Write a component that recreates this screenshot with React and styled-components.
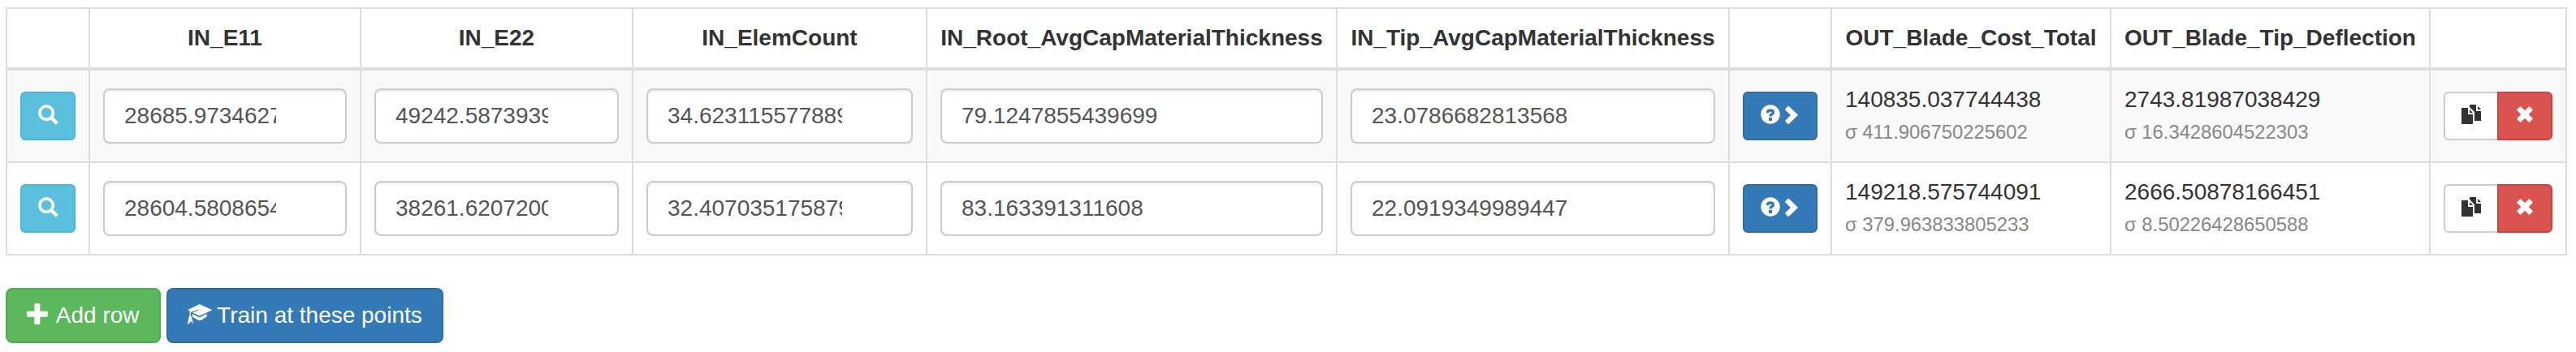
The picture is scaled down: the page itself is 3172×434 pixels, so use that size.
import React from "react";
import styled, { createGlobalStyle, css } from "styled-components";

const GlobalStyle = createGlobalStyle`
  * { box-sizing: border-box; }
  body {
    margin: 0;
    background: #fff;
    color: #333;
    font: 28px/40px "Liberation Sans", Arial, sans-serif;
  }
`;

const Page = styled.main`
  padding: 9px 7px 11px;
`;

const Table = styled.table`
  width: 3154px;
  table-layout: fixed;
  border-collapse: separate;
  border-spacing: 0;
  border: 0 solid #ddd;
  border-top-width: 2px;
  border-left-width: 2px;
  margin-bottom: 40px;
`;

const Col = styled.col`
  width: ${(p) => p.$w}px;
`;

const HeadCell = styled.th`
  height: 76px;
  padding: 16px 0;
  border-right: 2px solid #ddd;
  border-bottom: 4px solid #ddd;
  font-weight: bold;
  text-align: center;
  white-space: nowrap;
`;

const Row = styled.tr`
  &:nth-child(odd) { background: #f9f9f9; }
`;

const Cell = styled.td`
  height: 114px;
  padding: ${(p) => (p.$tight ? "16px 15px 16px 16px" : "16px")};
  border-right: 2px solid #ddd;
  border-bottom: 2px solid #ddd;
  vertical-align: middle;
`;

const NumberField = styled.input`
  display: block;
  width: 100%;
  height: 68px;
  padding: 12px ${(p) => (p.$spinner ? 85 : 24)}px 12px 24px;
  border: 2px solid #ccc;
  border-radius: 8px;
  background: #fff;
  box-shadow: inset 0 2px 2px rgba(0, 0, 0, 0.075);
  color: #555;
  font: inherit;
  outline: none;
`;

const Sigma = styled.div`
  color: #888;
  font-size: 23.8px;
`;

const tones = {
  info: css`background: #5bc0de; border-color: #46b8da; color: #fff;`,
  primary: css`background: #337ab7; border-color: #2e6da4; color: #fff;`,
  success: css`background: #5cb85c; border-color: #4cae4c; color: #fff;`,
  danger: css`background: #d9534f; border-color: #d43f3a; color: #fff;`,
  plain: css`background: #fff; border-color: #ccc; color: #333;`,
};

const Button = styled.button`
  display: inline-flex;
  align-items: center;
  gap: 7.8px;
  height: 68px;
  padding: 0 24px;
  border: 2px solid;
  border-radius: 8px;
  font: inherit;
  white-space: nowrap;
  ${(p) => tones[p.$tone]}
`;

const SmallButton = styled(Button)`
  display: flex;
  gap: 0;
  height: 60px;
  padding: 0 20px;
  border-radius: 6px;
`;

const ButtonGroup = styled.div`
  display: flex;
  ${SmallButton}:first-child { border-radius: 6px 0 0 6px; }
  ${SmallButton}:last-child { border-radius: 0 6px 6px 0; margin-left: -2px; }
`;

const Actions = styled.div`
  display: flex;
  gap: 7.8px;
`;

const Icon = styled.svg`
  flex: none;
  width: ${(p) => p.$size}px;
  height: ${(p) => p.$size}px;
  margin-bottom: ${(p) => (p.$size === 28 ? 6 : 4)}px;
  fill: currentColor;
  overflow: visible;
`;

const SearchIcon = () => (
  <Icon $size={24} viewBox="0 0 1200 1200">
    <path
      transform="matrix(1 0 0 -1 0 1200)"
      stroke="currentColor"
      strokeWidth="30"
      d="M507 1177q98 0 187.5-38.5t154.5-103.5t103.5-154.5t38.5-187.5q0-141-78-262l300-299q8-8 8-18.5t-8-18.5l-109-108q-7-8-17.5-8t-18.5 8l-300 299q-119-77-261-77q-98 0-188 38.5t-154.5 103t-103 154.5t-38.5 188t38.5 187.5t103 154.5t154.5 103.5t188 38.5zM506.5 1023q-89.5 0-165.5-44t-120-120.5t-44-166t44-165.5t120-120t165.5-44t166 44t120.5 120t44 165.5t-44 166t-120.5 120.5t-166 44z"
    />
  </Icon>
);

const PlusIcon = () => (
  <Icon $size={28} viewBox="0 0 1200 1200">
    <path
      transform="matrix(1 0 0 -1 0 1200)"
      d="M450 1100h200q21 0 35.5-14.5t14.5-35.5v-350h350q21 0 35.5-14.5t14.5-35.5v-200q0-21-14.5-35.5t-35.5-14.5h-350v-350q0-21-14.5-35.5t-35.5-14.5h-200q-21 0-35.5 14.5t-14.5 35.5v350h-350q-21 0-35.5 14.5t-14.5 35.5v200q0 21 14.5 35.5t35.5 14.5h350v350q0 21 14.5 35.5t35.5 14.5z"
    />
  </Icon>
);

const QuestionIcon = () => (
  <Icon $size={24} viewBox="0 0 24 24">
    <circle cx="12" cy="12" r="11.7" />
    <path d="M8.7 10.2V9.4Q8.7 7 12 7Q15.4 7 15.4 9.4Q15.4 10.8 13.8 11.7Q12 12.7 12 14.6" fill="none" stroke="#337ab7" strokeWidth="3.4" />
    <path d="M10 16h4v4h-4z" fill="#337ab7" />
  </Icon>
);

const ChevronIcon = () => (
  <Icon $size={24} viewBox="0 0 24 24">
    <path d="M9.6 2.1Q10.2 1.6 10.8 2.1L21.5 12.3Q22 12.9 21.5 13.5L10.8 23.7Q10.2 24.2 9.6 23.7L6.4 20.6Q5.9 20 6.4 19.4L13 12.9L6.4 6.4Q5.9 5.8 6.4 5.2Z" />
  </Icon>
);

const CopyIcon = () => (
  <Icon $size={24} viewBox="0 0 24 24">
    <path d="M0 4H8V12H14V24H0ZM10 6L14 10H10ZM10 0H18V8H24V20H16V9L10 3ZM20 2L24 6H20Z" />
  </Icon>
);

const RemoveIcon = () => (
  <Icon $size={24} viewBox="0 0 24 24">
    <path
      d="M6.6 2.9L12 8.2L17.4 2.9L21.1 6.6L15.8 12L21.1 17.4L17.4 21.1L12 15.8L6.6 21.1L2.9 17.4L8.2 12L2.9 6.6Z"
      stroke="currentColor"
      strokeWidth="1.4"
      strokeLinejoin="round"
    />
  </Icon>
);

const EducationIcon = () => (
  <Icon $size={28} viewBox="0 0 28 28">
    <path d="M14.8 3L30.3 10.3L14.8 17.4L6 13.3L13.8 10.4L13.2 9.7L4.2 12.8Q3.7 15 3.9 17.8Q5.2 18.6 5.1 20L7 27.3L4.4 24.8L3.6 23.8L2.6 26.2L0 28L1.4 20Q1.3 18.6 2.4 17.8Q2.3 14.5 3 12.2L0.2 10Z" />
    <path d="M6 15L14.8 19.4L23.6 15V18.4Q20 20.5 17.6 22.2Q14.8 24 12 22.2Q9.6 20.2 6 18.9Z" />
  </Icon>
);

const columns = [
  { label: "", width: 102 },
  { label: "IN_E11", width: 334 },
  { label: "IN_E22", width: 335 },
  { label: "IN_ElemCount", width: 362 },
  { label: "IN_Root_AvgCapMaterialThickness", width: 505 },
  { label: "IN_Tip_AvgCapMaterialThickness", width: 483 },
  { label: "", width: 126 },
  { label: "OUT_Blade_Cost_Total", width: 344 },
  { label: "OUT_Blade_Tip_Deflection", width: 393 },
  { label: "", width: 168 },
];

const rows = [
  {
    inputs: ["28685.9734627", "49242.5873939", "34.623115577889", "79.1247855439699", "23.0786682813568"],
    outputs: [
      ["140835.037744438", "411.906750225602"],
      ["2743.81987038429", "16.3428604522303"],
    ],
  },
  {
    inputs: ["28604.5808654", "38261.6207200", "32.407035175879", "83.163391311608", "22.0919349989447"],
    outputs: [
      ["149218.575744091", "379.963833805233"],
      ["2666.50878166451", "8.50226428650588"],
    ],
  },
];

export default function App() {
  return (
    <Page>
      <GlobalStyle />
      <Table>
        <colgroup>
          {columns.map((c, i) => <Col key={i} $w={c.width} />)}
        </colgroup>
        <thead>
          <tr>
            {columns.map((c, i) => <HeadCell key={i}>{c.label}</HeadCell>)}
          </tr>
        </thead>
        <tbody>
          {rows.map((row, r) => (
            <Row key={r}>
              <Cell>
                <SmallButton $tone="info"><SearchIcon /></SmallButton>
              </Cell>
              {row.inputs.map((value, i) => (
                <Cell key={i}>
                  <NumberField $spinner={i < 3} defaultValue={value} />
                </Cell>
              ))}
              <Cell>
                <SmallButton $tone="primary"><QuestionIcon /><ChevronIcon /></SmallButton>
              </Cell>
              {row.outputs.map(([mean, sigma]) => (
                <Cell key={mean}>
                  <div>{mean}</div>
                  <Sigma>σ {sigma}</Sigma>
                </Cell>
              ))}
              <Cell $tight>
                <ButtonGroup>
                  <SmallButton $tone="plain"><CopyIcon /></SmallButton>
                  <SmallButton $tone="danger"><RemoveIcon /></SmallButton>
                </ButtonGroup>
              </Cell>
            </Row>
          ))}
        </tbody>
      </Table>
      <Actions>
        <Button $tone="success"><PlusIcon />Add row</Button>
        <Button $tone="primary"><EducationIcon />Train at these points</Button>
      </Actions>
    </Page>
  );
}
